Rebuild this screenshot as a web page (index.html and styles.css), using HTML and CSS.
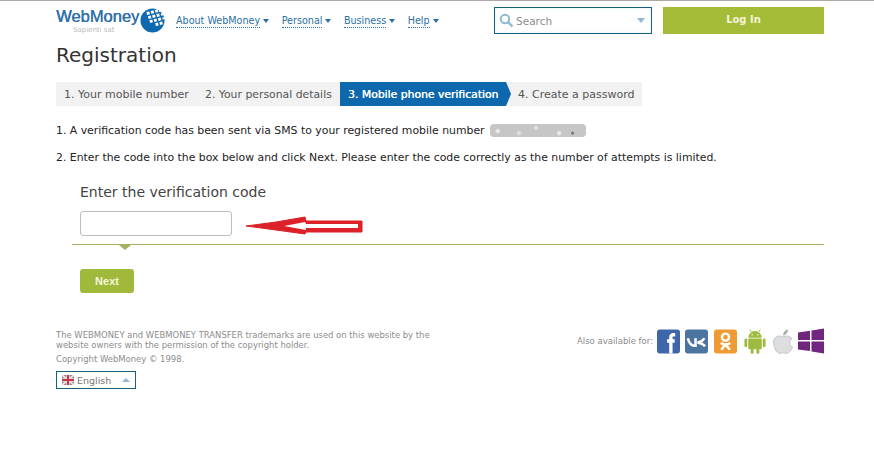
FILE: index.html
```html
<!DOCTYPE html>
<html lang="en">
<head>
  <meta charset="UTF-8">
  <title>Registration</title>
  <link rel="stylesheet" href="styles.css">
</head>
<body>

<div class="container">
  <div class="header">
    <div class="logo">
      <div class="logo-text">
        <div class="logo-name">WebMoney</div>
        <div class="logo-sub">Sapienti sat</div>
      </div>
      <svg class="logo-globe" width="25" height="25" viewBox="0 0 26 26">
        <circle cx="13" cy="13" r="12.5" fill="#0f69ae"/>
        <g fill="#fff" transform="rotate(-14 13 13)">
          <rect x="9" y="3" width="3" height="3"/>
          <rect x="13.5" y="3" width="3" height="3"/>
          <rect x="18" y="3" width="3" height="3"/>
          <rect x="22" y="4" width="2.5" height="2.5"/>
          <rect x="9.5" y="7.5" width="3" height="3"/>
          <rect x="14" y="7.5" width="3" height="3"/>
          <rect x="18.5" y="7.5" width="3" height="3"/>
          <rect x="23" y="8" width="2.5" height="2.5"/>
          <rect x="10" y="12" width="3" height="3"/>
          <rect x="14.5" y="12" width="3" height="3"/>
          <rect x="19" y="12" width="3" height="3"/>
          <rect x="23.5" y="12.5" width="2" height="2"/>
          <rect x="15" y="16.5" width="3" height="3"/>
          <rect x="19.5" y="16.5" width="3" height="3"/>
        </g>
      </svg>
    </div>
    <ul class="nav">
      <li><a href="#">About WebMoney</a></li>
      <li><a href="#">Personal</a></li>
      <li><a href="#">Business</a></li>
      <li><a href="#">Help</a></li>
    </ul>
    <div class="search">
      <svg width="15" height="15" viewBox="0 0 15 15">
        <circle cx="6" cy="6" r="4.2" fill="none" stroke="#8fb9d3" stroke-width="2"/>
        <path d="M9 9l4.5 4.5" stroke="#8fb9d3" stroke-width="2.4"/>
      </svg>
      <span class="search-text">Search</span>
      <span class="search-arrow"></span>
    </div>
    <div class="login">Log In</div>
  </div>

  <h1>Registration</h1>

  <div class="steps">
    <div class="step">1. Your mobile number</div>
    <div class="step">2. Your personal details</div>
    <div class="step active">3. Mobile phone verification</div>
    <div class="step last">4. Create a password</div>
  </div>

  <p class="line">1. A verification code has been sent via SMS to your registered mobile number <span class="hidden-number"></span></p>
  <p class="line">2. Enter the code into the box below and click Next. Please enter the code correctly as the number of attempts is limited.</p>

  <div class="code-form">
    <label class="code-label">Enter the verification code</label>
    <div class="code-box"></div>
    <svg class="red-arrow" width="118" height="20" viewBox="0 0 118 20">
      <path d="M0 10L30 6L59 1L60 5L116 5V16L60 16L59 18L30 14Z" fill="#dc2128" stroke="#dc2128" stroke-linejoin="round"/>
      <path d="M38 10L59 6L60 8L112 8V12L60 12V14Z" fill="#fff"/>
    </svg>
  </div>
  <div class="divider"></div>
  <div class="next">Next</div>

  <div class="footer">
    <div class="legal">
      <p class="legal-text">The WEBMONEY and WEBMONEY TRANSFER trademarks are used on this website by the website owners with the permission of the copyright holder.</p>
      <p class="legal-copy">Copyright WebMoney © 1998.</p>
      <div class="lang">
        <svg width="12" height="10" viewBox="0 0 12 10">
          <rect width="12" height="10" rx="1" fill="#8f7d8f"/>
          <path d="M0 0L12 10M12 0L0 10" stroke="#e8dfe4" stroke-width="2"/>
          <path d="M6 0V10M0 5H12" stroke="#e8dfe4" stroke-width="3.5"/>
          <path d="M6 0V10M0 5H12" stroke="#c7374a" stroke-width="2"/>
        </svg>
        <span class="lang-name">English</span>
        <span class="lang-arrow"></span>
      </div>
    </div>
    <div class="apps">
      <span class="apps-label">Also available for:</span>
      <svg width="23" height="25" viewBox="0 0 24 25">
        <rect width="24" height="25" rx="3" fill="#3f66a8"/>
        <path d="M19 5.5H17C15 5.5 14.5 6.5 14.5 8.5V25M10.5 12H18.5" fill="none" stroke="#fff" stroke-width="3.5"/>
      </svg>
      <svg width="23" height="25" viewBox="0 0 24 25">
        <rect width="24" height="25" rx="3" fill="#4b759f"/>
        <path d="M3 9C4 14 7 17 11 17V9M20 9C19 11.5 17 13 13 13.5C17 14 19 15 21 17.5" fill="none" stroke="#fff" stroke-width="2.6"/>
      </svg>
      <svg class="app-ok" width="23" height="25" viewBox="0 0 24 25">
        <rect width="24" height="25" rx="3" fill="#ee9b34"/>
        <circle cx="12" cy="8" r="3.7" fill="none" stroke="#fff" stroke-width="2.5"/>
        <path d="M7 14C10 16 14 16 17 14M12 15.5L7.5 21M12 15.5L16.5 21" fill="none" stroke="#fff" stroke-width="2.5"/>
      </svg>
      <svg class="app-android" width="22" height="25" viewBox="0 0 22 26">
        <g fill="#9dbb3e">
          <path d="M4 9A7 7 0 0 1 18 9Z"/>
          <rect x="4" y="10" width="14" height="11" rx="1"/>
          <rect y="10" width="3" height="9" rx="1.5"/>
          <rect x="19" y="10" width="3" height="9" rx="1.5"/>
          <rect x="6.5" y="20" width="3" height="6" rx="1.5"/>
          <rect x="12.5" y="20" width="3" height="6" rx="1.5"/>
        </g>
        <path d="M7 3L5.5 .5M15 3L16.5 .5" stroke="#9dbb3e"/>
        <circle cx="8" cy="6" r=".8" fill="#fff"/>
        <circle cx="14" cy="6" r=".8" fill="#fff"/>
      </svg>
      <svg class="app-apple" width="20" height="25" viewBox="0 0 20 25">
        <path d="M10 8C7 6 1 6.5 .5 13C.5 19 4 24.5 7 24.5C8.5 24.5 9 23.8 10 23.8C11 23.8 12 24.5 13.5 24.5C16 24.5 18.5 21 19.5 18C16.5 16.5 15.5 11.5 19 9.5C16.5 6.5 12.5 6.5 10 8Z" fill="#dcdee0" stroke="#b4b7ba" stroke-width=".7"/>
        <path d="M10 6.5C10 3.5 12 1 15 .5C15 3.5 13 6 10 6.5Z" fill="#a9acaf"/>
      </svg>
      <svg width="26" height="26" viewBox="0 0 26 26">
        <path d="M0 4.5L12 2.8V12H0ZM13.5 2.600L26 .5V12H13.5ZM0 13.5H12V23L0 21.5ZM13.5 13.5H26V25.5L13.5 23.5Z" fill="#70257f"/>
      </svg>
    </div>
  </div>
</div>

</body>
</html>
```

FILE: styles.css
```css
* {
  box-sizing: border-box;
  margin: 0;
  padding: 0;
}

body {
  background-color: #fff;
  color: #333;
  font-family: "DejaVu Sans", Verdana, sans-serif;
  font-size: 11px;
  border-top: 1px solid #aaa;
}

.container {
  width: 768px;
  margin-left: 56px;
}

.header {
  display: flex;
  align-items: flex-start;
  height: 36px;
  padding-top: 6px;
}

.logo {
  display: flex;
  width: 120px;
  gap: 6px;
  padding-top: 1px;
}

.logo-text {
  width: 78px;
}

.logo-name {
  color: #2f70aa;
  font-family: "Liberation Sans", Arial, sans-serif;
  font-size: 16.5px;
  line-height: 17px;
  text-shadow: 0.4px 0 #2f70aa;
  white-space: nowrap;
}

.logo-sub {
  color: #bbb;
  font-size: 7px;
  line-height: 8px;
  margin-top: 1px;
  padding-left: 17px;
  white-space: nowrap;
}

.nav {
  display: flex;
  list-style: none;
  gap: 12.5px;
  width: 318px;
  padding-top: 7px;
}

.nav li {
  display: flex;
  align-items: center;
  gap: 3px;
}

.nav li::after {
  content: "";
  border-left: 3.5px solid transparent;
  border-right: 3.5px solid transparent;
  border-top: 4px solid #2a6ea6;
}

.nav a {
  color: #2a6ea6;
  font-size: 9.6px;
  line-height: 13px;
  text-decoration: none;
  border-bottom: 1px dotted #2a6ea6;
}

.search {
  display: flex;
  align-items: center;
  gap: 2px;
  width: 158px;
  height: 27px;
  padding: 0 6px 0 4px;
  border: 1px solid #17617f;
  box-shadow: inset 0 0 3px #d9eef7;
}

.search-text {
  color: #8c8c8c;
  font-size: 10.5px;
  flex: 1;
}

.search-arrow {
  border-left: 4px solid transparent;
  border-right: 4px solid transparent;
  border-top: 5px solid #8fb9d3;
}

.login {
  width: 161px;
  height: 27px;
  margin-left: 11px;
  background-color: #a4bb38;
  color: #f2f5d8;
  font-size: 10px;
  font-weight: bold;
  line-height: 26px;
  text-align: center;
}

h1 {
  color: #333;
  font-size: 20px;
  font-weight: normal;
  line-height: 24px;
  margin-top: 6px;
}

.steps {
  display: flex;
  height: 24px;
  width: 586px;
  margin-top: 15px;
  background-color: #f2f2f2;
  color: #555;
  font-size: 11px;
  line-height: 25px;
}

.step {
  padding-left: 8px;
  white-space: nowrap;
}

.step:nth-child(1) {
  width: 141px;
}

.step:nth-child(2) {
  width: 143px;
  font-size: 10.85px;
}

.step.active {
  position: relative;
  width: 166px;
  background-color: #0e68ad;
  color: #fff;
  font-size: 10.8px;
  text-shadow: 0.35px 0 #fff;
}

.step.active::after {
  content: "";
  position: absolute;
  top: 0;
  left: 100%;
  border-top: 12px solid transparent;
  border-bottom: 12px solid transparent;
  border-left: 5px solid #0e68ad;
}

.step.last {
  padding-left: 12px;
}

.line {
  color: #222;
  font-size: 10.87px;
  line-height: 14px;
}

.steps + .line {
  margin-top: 18px;
}

.line + .line {
  margin-top: 13px;
}

.hidden-number {
  display: inline-block;
  width: 96px;
  height: 13px;
  margin-left: 2px;
  vertical-align: -3px;
  border-radius: 4px;
  background-color: #c6c6c6;
  background-image:
    radial-gradient(circle at 8% 55%, #eee 1px, transparent 3px),
    radial-gradient(circle at 30% 70%, #e2e2e2 1px, transparent 3px),
    radial-gradient(circle at 48% 30%, #e2e2e2 1px, transparent 3px),
    radial-gradient(circle at 72% 70%, #eee 1px, transparent 3px),
    radial-gradient(circle at 86% 70%, #777 1px, transparent 2px);
}

.code-form {
  position: relative;
  padding-left: 24px;
  margin-top: 19px;
}

.code-label {
  display: block;
  color: #444;
  font-size: 14px;
  line-height: 17px;
}

.code-box {
  width: 152px;
  height: 25px;
  margin-top: 10px;
  background: #fff;
  border: 1px solid #bdbdbd;
  border-radius: 3px;
}

.red-arrow {
  position: absolute;
  left: 190px;
  top: 32px;
}

.divider {
  position: relative;
  height: 1px;
  margin: 8px 0 0 16px;
  background-color: #a2b25f;
}

.divider::after {
  content: "";
  position: absolute;
  left: 47px;
  top: 1px;
  border-left: 6px solid transparent;
  border-right: 6px solid transparent;
  border-top: 5px solid #a2b25f;
}

.next {
  width: 54px;
  height: 24px;
  margin: 24px 0 0 24px;
  border-radius: 3px;
  background-color: #a0b93b;
  color: #f4f7dc;
  font-family: "Liberation Sans", Arial, sans-serif;
  font-size: 11px;
  font-weight: bold;
  line-height: 24px;
  text-align: center;
}

.footer {
  display: flex;
  justify-content: space-between;
  align-items: flex-start;
  margin-top: 37px;
}

.legal {
  width: 385px;
  color: #8c8c8c;
  font-size: 8.45px;
}

.legal-text {
  line-height: 10px;
}

.legal-copy {
  line-height: 10px;
  margin-top: 4px;
}

.lang {
  display: flex;
  align-items: center;
  width: 80px;
  height: 18px;
  margin-top: 7px;
  padding: 0 5px;
  border: 1px solid #17617f;
}

.lang-name {
  flex: 1;
  margin-left: 3px;
  font-size: 9.5px;
  color: #777;
}

.lang-arrow {
  border-left: 4px solid transparent;
  border-right: 4px solid transparent;
  border-bottom: 4px solid #8fb9d3;
}

.apps {
  display: flex;
  align-items: center;
  gap: 5px;
  margin-top: -2px;
}

.apps-label {
  color: #8c8c8c;
  font-size: 8.5px;
  margin-right: -1px;
}

.app-ok {
  margin-left: 1px;
}

.app-android,
.app-apple {
  margin-left: 2px;
}
```
